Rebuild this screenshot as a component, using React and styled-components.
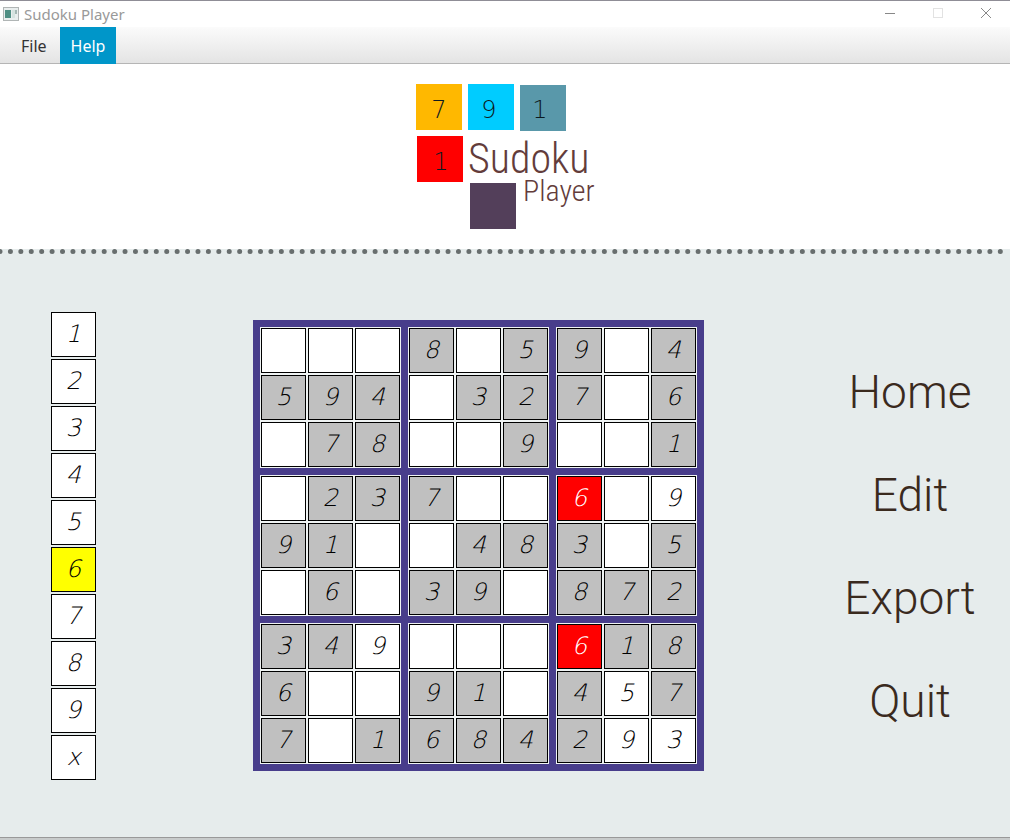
import React from "react";
import styled, { createGlobalStyle } from "styled-components";

const GlobalStyle = createGlobalStyle`
  * { box-sizing: border-box; }
  body { margin: 0; background: #fff; font-family: "Noto Sans", sans-serif; }
`;

const Window = styled.div`
  display: flex;
  flex-direction: column;
  min-height: 100vh;
  border-top: 1px solid #8f8d96;
`;

const TitleBar = styled.header`
  display: flex;
  align-items: center;
  justify-content: space-between;
  height: 26px;
  padding: 0 18px 0 3px;
  background: #fff;
`;

const Title = styled.h1`
  display: flex;
  align-items: center;
  gap: 5px;
  margin: 0;
  font-size: 15px;
  line-height: 24px;
  font-weight: 400;
  color: #999;
`;

const WindowControls = styled.div`
  display: flex;
  gap: 36px;
`;

const ControlButton = styled.button`
  display: flex;
  padding: 0;
  border: 0;
  background: none;
`;

const MenuBar = styled.nav`
  display: flex;
  height: 37px;
  padding-left: 10px;
  border-bottom: 1px solid #b5b5b5;
  background: linear-gradient(#fbfbfb, #e4e4e4);
`;

const MenuItem = styled.button`
  padding: 0 11px;
  margin-right: ${(p) => (p.$active ? 0 : 2)}px;
  height: 37px;
  border: 0;
  background: ${(p) => (p.$active ? "#0096c9" : "transparent")};
  color: ${(p) => (p.$active ? "#fff" : "#333")};
  font-family: "Noto Sans", sans-serif;
  font-size: 16px;
  line-height: 36px;
`;

const Banner = styled.div`
  display: flex;
  justify-content: center;
  padding: 20px 0;
  background: #fff;
`;

const LogoText = styled.text`
  font-family: "Roboto Condensed Light", "Roboto Condensed", "Open Sans Condensed Light", sans-serif;
  font-weight: 300;
  font-size: ${(p) => p.$size}px;
  fill: #633c3b;
`;

const LogoDigit = styled.text`
  font-family: "DejaVu Sans", sans-serif;
  font-weight: 200;
  font-size: 24px;
  text-anchor: middle;
  fill: #0d1a20;
`;

const Dots = styled.svg`
  display: block;
  width: calc(100% - 8px);
  height: 5px;
  overflow: visible;
`;

const Content = styled.main`
  display: flex;
  flex: 1;
  flex-direction: column;
  background: #e6ecec;
`;

const Play = styled.div`
  display: flex;
  align-items: center;
  flex: 1;
  padding: 58px 35px 57px 51px;
`;

const Pad = styled.div`
  display: flex;
  flex-direction: column;
  gap: 2px;
`;

const tones = {
  empty: "#fff",
  given: "#c0c0c0",
  entered: "#fff",
  wrong: "#f00",
  selected: "#ff0",
};

const Cell = styled.button`
  width: 45px;
  height: 45px;
  padding: 0;
  border: 1px solid #000;
  background: ${(p) => tones[p.$tone]};
  color: ${(p) => (p.$tone === "wrong" ? "#fff" : "#000")};
  font-family: "DejaVu Sans Light", "Open Sans", sans-serif;
  font-style: italic;
  font-weight: 300;
  font-size: 24px;
  line-height: 43px;
  text-align: center;
`;

const Center = styled.div`
  display: flex;
  flex: 1;
  justify-content: center;
  padding: 0 0 1px 16px;
`;

const Board = styled.div`
  display: grid;
  grid-template-columns: repeat(3, auto);
  gap: 7px;
  padding: 7px;
  background: #483d8b;
`;

const Block = styled.div`
  display: grid;
  grid-template-columns: repeat(3, auto);
  gap: 2px;
  padding: 1px;
  background: #eff3f3;
`;

const Actions = styled.nav`
  display: flex;
  flex-direction: column;
  align-items: center;
  gap: 43px;
  width: 130px;
`;

const Action = styled.button`
  padding: 0;
  border: 0;
  background: none;
  color: #3a2a1e;
  font-family: Roboto, sans-serif;
  font-weight: 300;
  font-size: 46px;
  line-height: 60px;
`;

const StatusEdge = styled.footer`
  height: 3px;
  border-top: 1px solid #999;
  background: #c8cbcb;
`;

// Each row lists nine cells: "." empty, "=n" typed by the player, "!n" in conflict.
const rows = [
  ". . . 8 . 5 9 . 4",
  "5 9 4 . 3 2 7 . 6",
  ". 7 8 . . 9 . . 1",
  ". 2 3 7 . . !6 . =9",
  "9 1 . . 4 8 3 . 5",
  ". 6 . 3 9 . 8 7 2",
  "3 4 =9 . . . !6 1 8",
  "6 . . 9 1 . 4 =5 7",
  "7 . 1 6 8 4 2 =9 =3",
].map((row) => row.split(" "));

const blocks = Array.from({ length: 9 }, (_, b) => {
  const top = Math.floor(b / 3) * 3;
  const left = (b % 3) * 3;
  return rows.slice(top, top + 3).flatMap((row) => row.slice(left, left + 3));
});

const toneOf = (mark) => {
  if (mark === ".") return "empty";
  if (mark[0] === "!") return "wrong";
  if (mark[0] === "=") return "entered";
  return "given";
};

const padKeys = ["1", "2", "3", "4", "5", "6", "7", "8", "9", "x"];

function Logo() {
  return (
    <svg width="178" height="145" overflow="visible" role="img" aria-label="Sudoku Player">
      <rect x="0" y="0" width="46" height="46" fill="#ffb800" />
      <rect x="52" y="0" width="46" height="46" fill="#0cf" />
      <rect x="104" y="1" width="46" height="46" fill="#5998aa" />
      <rect x="1" y="52" width="46" height="46" fill="#f00" />
      <rect x="54" y="99" width="46" height="46" fill="#533f5a" />
      <LogoDigit x="23" y="34">7</LogoDigit>
      <LogoDigit x="73" y="34">9</LogoDigit>
      <LogoDigit x="124" y="34">1</LogoDigit>
      <LogoDigit x="25" y="86">1</LogoDigit>
      <LogoText x="52" y="89" $size={42}>Sudoku</LogoText>
      <LogoText x="107" y="117" $size={30}>Player</LogoText>
    </svg>
  );
}

export default function App() {
  return (
    <Window>
      <GlobalStyle />
      <TitleBar>
        <Title>
          <svg width="16" height="14" aria-hidden="true">
            <rect x="0.5" y="0.5" width="15" height="13" fill="#e9eeee" stroke="#b0b5b5" />
            <rect x="2" y="3" width="6" height="8" fill="#4f8f84" />
            <rect x="9" y="3" width="3" height="8" fill="#d5e3e0" />
            <rect x="12" y="3" width="2" height="4" fill="#a5b8b5" />
          </svg>
          Sudoku Player
        </Title>
        <WindowControls>
          <ControlButton aria-label="Minimize">
            <svg width="12" height="12"><path d="M1 5.5h10" stroke="#888" /></svg>
          </ControlButton>
          <ControlButton aria-label="Maximize" disabled>
            <svg width="12" height="12"><rect x="1.5" y="0.5" width="9" height="9" fill="none" stroke="#e2e2e2" /></svg>
          </ControlButton>
          <ControlButton aria-label="Close">
            <svg width="12" height="12"><path d="M1 0l10 10M11 0L1 10" stroke="#888" /></svg>
          </ControlButton>
        </WindowControls>
      </TitleBar>
      <MenuBar>
        <MenuItem>File</MenuItem>
        <MenuItem $active>Help</MenuItem>
      </MenuBar>
      <Banner>
        <Logo />
      </Banner>
      <Content>
        <Dots aria-hidden="true">
          <line x1="0" y1="2.5" x2="100%" y2="2.5" stroke="#686e6e" strokeWidth="5" strokeLinecap="round" strokeDasharray="0 10.42" />
        </Dots>
        <Play>
          <Pad>
            {padKeys.map((key) => (
              <Cell key={key} $tone={key === "6" ? "selected" : "empty"}>{key}</Cell>
            ))}
          </Pad>
          <Center>
            <Board>
              {blocks.map((block, b) => (
                <Block key={b}>
                  {block.map((mark, i) => (
                    <Cell key={i} $tone={toneOf(mark)} aria-label={mark === "." ? "Empty cell" : undefined}>
                      {mark.replace(/[.=!]/, "")}
                    </Cell>
                  ))}
                </Block>
              ))}
            </Board>
          </Center>
          <Actions>
            <Action>Home</Action>
            <Action>Edit</Action>
            <Action>Export</Action>
            <Action>Quit</Action>
          </Actions>
        </Play>
      </Content>
      <StatusEdge />
    </Window>
  );
}
